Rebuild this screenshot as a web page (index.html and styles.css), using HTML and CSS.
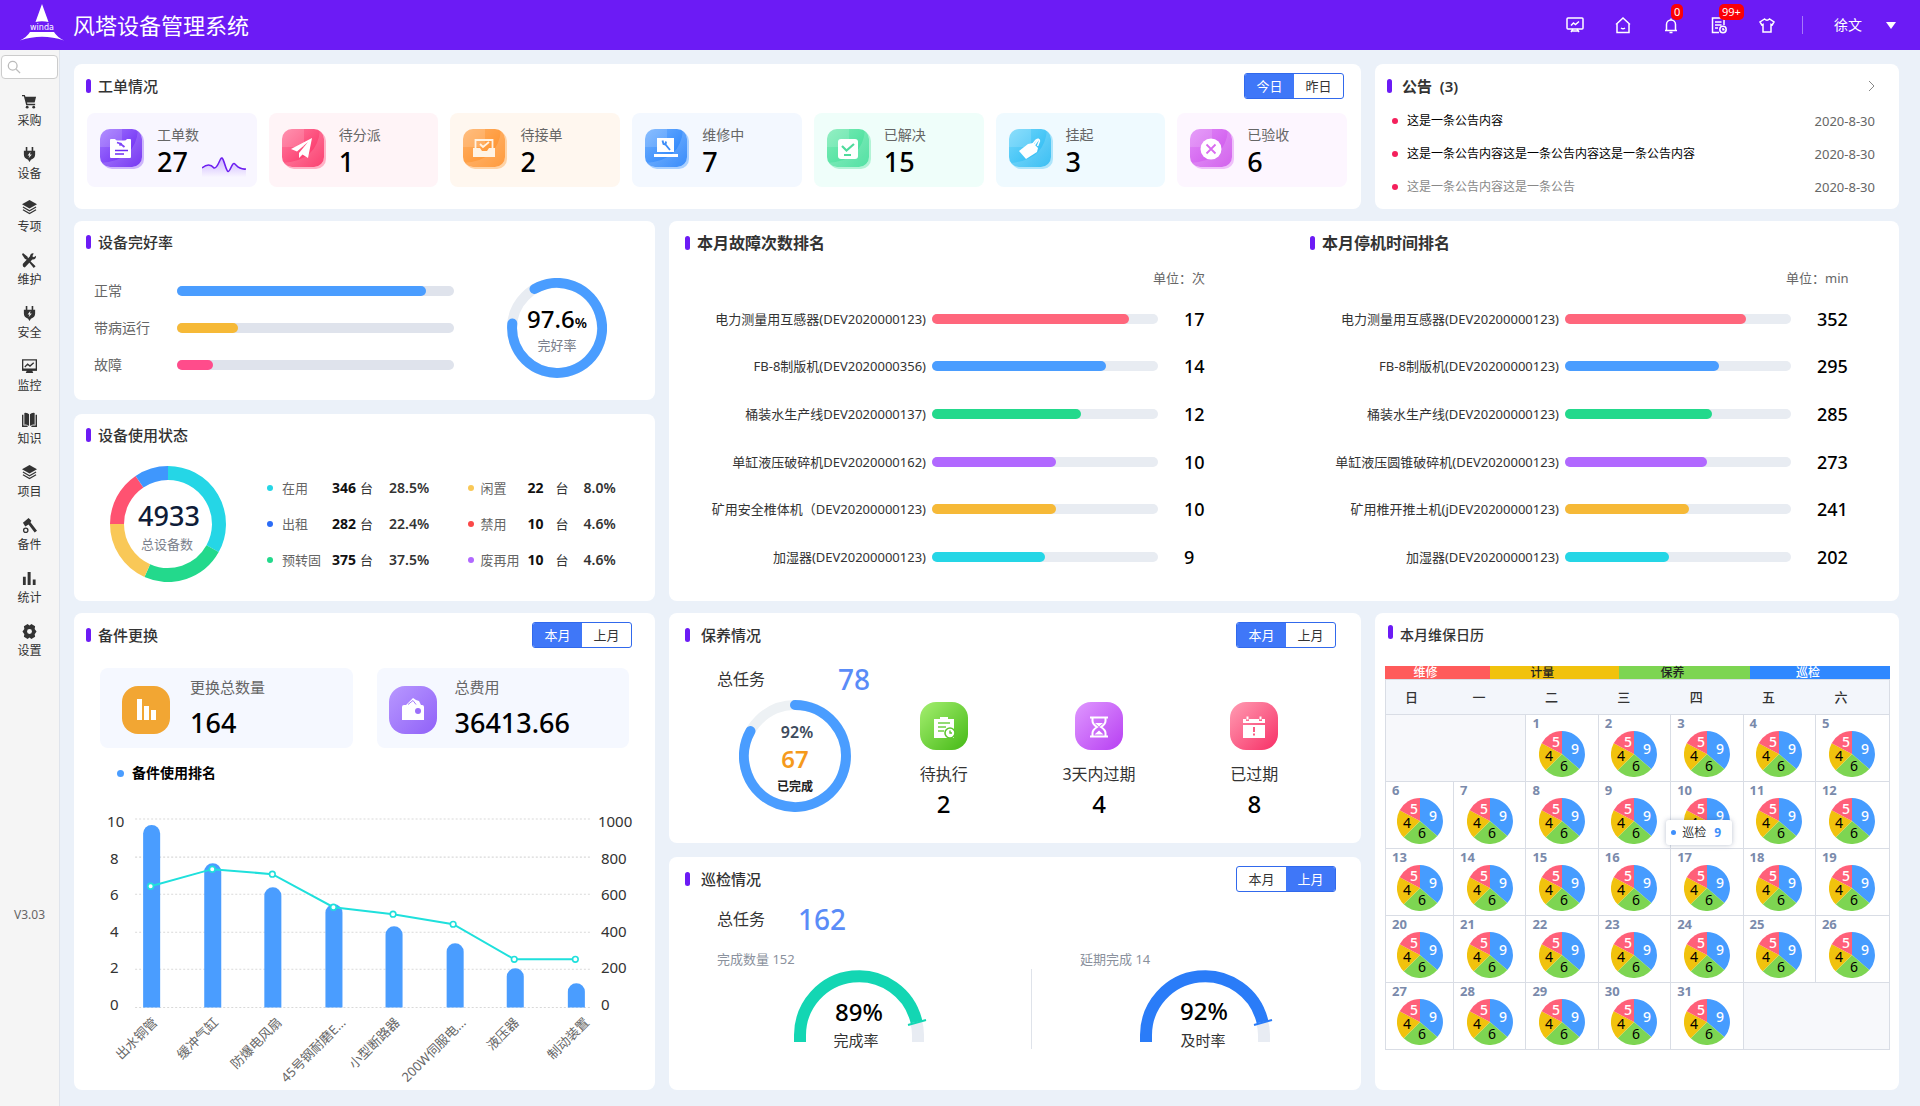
FILE: index.html
```html
<!DOCTYPE html>
<html lang="zh-CN">
<head>
  <meta charset="UTF-8" />
  <meta name="viewport" content="width=device-width, initial-scale=1.0"/>
  <title>风塔设备管理系统</title>
  <link rel="stylesheet" href="styles.css">
</head>
<body>
  <header class="topbar">
    <svg class="logo" viewBox="0 0 44 38" width="44" height="38">
      <path d="M22 0 L28.500 18 Q22 16.500 15.500 18 Z" fill="#fff"/>
      <text x="22" y="26" text-anchor="middle" class="logo-text">winda</text>
      <path d="M10 28 H34 Q37 33 44 36.500 Q22 29 0 36.500 Q7 33 10 28 Z" fill="#fff"/>
    </svg>
    <h1>风塔设备管理系统</h1>
    <nav class="top-icons">
      <button class="icon-btn" aria-label="看板">
        <svg viewBox="0 0 18 18"><rect x="1" y="2" width="16" height="11" rx="1"/><path d="M5 9.500l2.500-2.500 2 1.500L13 5.500M7 13l-2 3M11 13l2 3M6 15h6"/></svg>
      </button>
      <button class="icon-btn" aria-label="首页">
        <svg viewBox="0 0 18 18"><path d="M3 8v8.500h12V8M2 8.500L9 2l7 6.500M7 12q2 1.500 4 0"/></svg>
      </button>
      <button class="icon-btn" aria-label="消息">
        <svg viewBox="0 0 18 18"><path d="M3 14.500h12M4.500 14V8.500a4.500 4.500 0 0 1 9 0V14M7.500 16.500h3M9 4V2.500"/></svg>
        <span class="badge">0</span>
      </button>
      <button class="icon-btn" aria-label="待办">
        <svg viewBox="0 0 18 18"><path d="M9 16.500H2.500V2H14v7M5 6h6.500M5 9h6.500M5 12h3"/><circle cx="13" cy="13.500" r="3.200"/><path d="M13 12v1.700h1.500"/></svg>
        <span class="badge">99+</span>
      </button>
      <button class="icon-btn" aria-label="换肤">
        <svg viewBox="0 0 18 18"><path d="M6.500 3L2 6l1.800 3L5 8.400V16h8V8.400l1.200.6L16 6l-4.500-3q-2.500 2.500-5 0z"/></svg>
      </button>
    </nav>
    <button class="user">徐文<span class="caret"></span></button>
  </header>

  <div class="layout">
    <aside class="sidebar">
      <div class="search">
        <svg viewBox="0 0 16 16"><circle cx="6.500" cy="6.500" r="5"/><path d="M10.500 10.500L15 15"/></svg>
        <input type="text" aria-label="搜索" />
      </div>
      <a href="#"><svg viewBox="0 0 16 16"><path d="M0 1h3l.7 2H15l-1.500 6H5.400l.3 1.500H14V12H4.500L2 2.500H0z"/><circle cx="5.500" cy="14" r="1.500"/><circle cx="12.500" cy="14" r="1.500"/></svg>采购</a>
      <a href="#"><svg viewBox="0 0 16 16"><path d="M4 0h1.700v4h4.600V0H12v4h2v4q0 4-4.500 5.500L8 16l-1.500-2.500Q2 12 2 8V4h2z"/><path d="M9 5L6 9h2l-1 3 3.500-4h-2z" fill="#f5f5f5"/></svg>设备</a>
      <a href="#"><svg viewBox="0 0 16 16"><path d="M8 0l8 4.500L8 9 0 4.500z"/><path d="M1 7.500l7 4 7-4M1 10.500l7 4 7-4" fill="none" stroke="#333" stroke-width="1.300"/></svg>专项</a>
      <a href="#"><svg viewBox="0 0 16 16"><path d="M1 0l5 4 .5 2.500L14.500 14l-2 2L5.500 7.500 3 6 0 1.500z"/><path d="M15 3l-2.500 1.500L11 3.500 12.500.5Q9-.5 8.500 3.500L1 11.500Q0 15 3 15.500L11 7q4 .5 4-4z"/></svg>维护</a>
      <a href="#"><svg viewBox="0 0 16 16"><path d="M4 0h1.700v4h4.600V0H12v4h2v4q0 4-4.500 5.500L8 16l-1.500-2.500Q2 12 2 8V4h2z"/><path d="M9 5L6 9h2l-1 3 3.500-4h-2z" fill="#f5f5f5"/></svg>安全</a>
      <a href="#"><svg viewBox="0 0 16 16"><path d="M.7 1h14.600v10.500H.7zM3 8.500l3-3 2.500 2L12.500 4" fill="none" stroke="#333" stroke-width="1.400"/><path d="M0 10h16v2.500h-5l1 2.500H4l1-2.500H0z"/></svg>监控</a>
      <a href="#"><svg viewBox="0 0 16 16"><path d="M2.500 1Q6 .5 7.500 2.500V15Q6 13 2.500 13.500zM13.500 1Q10 .5 8.500 2.500V15q1.500-2 5-1.500zM0 3h1.500v11.500H6V16H0zM16 3h-1.500v11.500H10V16h6z"/></svg>知识</a>
      <a href="#"><svg viewBox="0 0 16 16"><path d="M8 0l8 4.500L8 9 0 4.500z"/><path d="M1 7.500l7 4 7-4M1 10.500l7 4 7-4" fill="none" stroke="#333" stroke-width="1.300"/></svg>项目</a>
      <a href="#"><svg viewBox="0 0 16 16"><path d="M1 5l6-5 3 3-1 1.500 7 9-2.500 2L7 7 3.500 9z"/><circle cx="4" cy="13" r="2.300" fill="none" stroke="#333" stroke-width="1.400"/></svg>备件</a>
      <a href="#"><svg viewBox="0 0 16 16"><path d="M1 6h3v9H1zM6 1h3.200v14H6zM11.500 9h3v6h-3z"/></svg>统计</a>
      <a href="#"><svg viewBox="0 0 16 16"><path d="M6 0l2 1.500L10 0l4 2.500-.5 2.700 2 2.800-2 2.800.5 2.700L10 16l-2-1.500L6 16l-4-2.500.5-2.700L.5 8l2-2.800L2 2.500z"/><circle cx="8" cy="8" r="2.600" fill="#f5f5f5"/></svg>设置</a>
      <span class="version">V3.03</span>
    </aside>

    <main class="board">
      <!-- work orders -->
      <section class="card orders">
        <div class="card-head">
          <h2>工单情况</h2>
          <div class="toggle"><button class="on">今日</button><button>昨日</button></div>
        </div>
        <div class="tiles">
          <div class="tile purple">
            <svg class="tile-icon" viewBox="0 0 42 38"><path class="shine" d="M0 0h22v18H0zM0 34Q36 32 38 0h4v38H0z"/><path d="M10 11q0-1 1-1h4q1 1.500 3 1.500h6q2 0 3-1.500h3q1 0 1 1v17q0 1-1 1H11q-1 0-1-1z" fill="#fff"/><path d="M17 13.500l3 1 4.500 3.500M19.500 16.500l2-2.500" stroke="#7d45f6" stroke-width="1.800" fill="none"/><path d="M15 21.500h13M15 25h9" stroke="#6d2cf3" stroke-width="1.500"/></svg>
            <div><p>工单数</p><strong>27</strong></div>
            <svg class="spark" viewBox="0 0 44 20">
              <defs><linearGradient id="sparkFill" x1="0" y1="0" x2="0" y2="1"><stop offset="0" stop-color="#c9b0ff"/><stop offset="1" stop-color="#f8f5ff"/></linearGradient></defs>
              <path d="M0 11Q7 5 12 11Q16 12 20 0Q24 11 27 14Q30 5 32 6Q36 12 44 12V20H0z" fill="url(#sparkFill)"/>
              <path d="M0 11Q7 5 12 11C16 12 18 0 20 1S24 14 26 14.500S30 6 32 6.500S36 13 44 12" fill="none" stroke="#6d1ff0" stroke-width="1.600"/>
            </svg>
          </div>
          <div class="tile rose">
            <svg class="tile-icon" viewBox="0 0 42 38"><path class="shine" d="M0 0h22v18H0zM0 34Q36 32 38 0h4v38H0z"/><path d="M30 9L9 20l6 2.500L26 13l-9 11v5l3.500-3.500L26 29z" fill="#fff"/></svg>
            <div><p>待分派</p><strong>1</strong></div>
          </div>
          <div class="tile orange">
            <svg class="tile-icon" viewBox="0 0 42 38"><path class="shine" d="M0 0h22v18H0zM0 34Q36 32 38 0h4v38H0z"/><path d="M12.500 20V11h17v9M17 15l3 3 6-5" fill="none" stroke="#fff3e4" stroke-width="1.800"/><path d="M10 19h7l2 3h5l2-3h6v9H10z" fill="#fff3e4"/></svg>
            <div><p>待接单</p><strong>2</strong></div>
          </div>
          <div class="tile blue">
            <svg class="tile-icon" viewBox="0 0 42 38"><path class="shine" d="M0 0h22v18H0zM0 34Q36 32 38 0h4v38H0z"/><path d="M12 9h17v14H12zM9 25h24v3H9z" fill="#fff"/><path d="M17.500 11.500l1 3.500 2 .5 4.500 5.500M21 12.500l-.5 3" fill="none" stroke="#3c8df8" stroke-width="1.900"/></svg>
            <div><p>维修中</p><strong>7</strong></div>
          </div>
          <div class="tile green">
            <svg class="tile-icon" viewBox="0 0 42 38"><path class="shine" d="M0 0h22v18H0zM0 34Q36 32 38 0h4v38H0z"/><rect x="11" y="10" width="20" height="20" rx="3" fill="#fff"/><path d="M15 17l4.500 4.500L27 15M17 26h7" fill="none" stroke="#4fdb9c" stroke-width="2.200"/></svg>
            <div><p>已解决</p><strong>15</strong></div>
          </div>
          <div class="tile sky">
            <svg class="tile-icon" viewBox="0 0 42 38"><path class="shine" d="M0 0h22v18H0zM0 34Q36 32 38 0h4v38H0z"/><path d="M10 22l9-7 5-1 5 5-1 4-11 7z" fill="#fff"/><path d="M24 18l5-7M23 16l4-5q3-2 3.500 1l-2 5" fill="none" stroke="#fff" stroke-width="1.500"/></svg>
            <div><p>挂起</p><strong>3</strong></div>
          </div>
          <div class="tile pink">
            <svg class="tile-icon" viewBox="0 0 42 38"><path class="shine" d="M0 0h22v18H0zM0 34Q36 32 38 0h4v38H0z"/><circle cx="21" cy="20" r="10.500" fill="#fff"/><path d="M16.500 15.500l9 9M25.500 15.500l-9 9" stroke="#d96bf0" stroke-width="1.800"/></svg>
            <div><p>已验收</p><strong>6</strong></div>
          </div>
        </div>
      </section>

      <!-- notices -->
      <section class="card notices">
        <div class="card-head">
          <h2>公告&nbsp; (3)</h2>
          <a href="#" class="more" aria-label="更多"><svg viewBox="0 0 8 12"><path d="M1 1l5 5-5 5"/></svg></a>
        </div>
        <ul>
          <li><span>这是一条公告内容</span><time>2020-8-30</time></li>
          <li><span>这是一条公告内容这是一条公告内容这是一条公告内容</span><time>2020-8-30</time></li>
          <li class="read"><span>这是一条公告内容这是一条公告</span><time>2020-8-30</time></li>
        </ul>
      </section>

      <div class="stack devices">
        <section class="card">
          <div class="card-head"><h2>设备完好率</h2></div>
          <div class="health">
            <div class="health-bars">
              <div class="health-row"><span>正常</span><div class="bar"><i class="c-blue" style="width:90%"></i></div></div>
              <div class="health-row"><span>带病运行</span><div class="bar"><i class="c-amber" style="width:22%"></i></div></div>
              <div class="health-row"><span>故障</span><div class="bar"><i class="c-hot" style="width:13%"></i></div></div>
            </div>
            <svg viewBox="0 0 100 100" width="100" height="100">
              <circle cx="50" cy="50" r="45" fill="none" stroke="#e8ecf2" stroke-width="10"/>
              <path d="M27.500 11A45 45 0 1 1 5.300 45.500" fill="none" stroke="#4a9dff" stroke-width="10" stroke-linecap="round"/>
              <text x="50" y="50" text-anchor="middle" class="ring-num">97.6<tspan class="ring-unit">%</tspan></text>
              <text x="50" y="72" text-anchor="middle" class="ring-label">完好率</text>
            </svg>
          </div>
        </section>

        <section class="card">
          <div class="card-head"><h2>设备使用状态</h2></div>
          <div class="usage">
            <svg viewBox="0 0 116 116" width="116" height="116">
              <g fill="none" stroke-width="14">
                <path d="M58 7A51 51 0 0 1 102.600 82.700" stroke="#25d6e6"/>
                <path d="M102.600 82.700A51 51 0 0 1 37.300 104.600" stroke="#23d98c"/>
                <path d="M37.300 104.600A51 51 0 0 1 7 58" stroke="#f9c857"/>
                <path d="M7 58A51 51 0 0 1 29.500 15.700" stroke="#ff5271"/>
                <path d="M29.500 15.700A51 51 0 0 1 58 7" stroke="#3f97fd"/>
              </g>
              <text x="59" y="60" text-anchor="middle" class="donut-num">4933</text>
              <text x="57" y="83" text-anchor="middle" class="donut-label">总设备数</text>
            </svg>
            <div class="legend">
              <div class="legend-row"><i class="c-cyan"></i><span>在用</span><b>346</b><em>台</em><b class="pct">28.5%</b></div>
              <div class="legend-row"><i class="c-yellow"></i><span>闲置</span><b>22</b><em>台</em><b class="pct">8.0%</b></div>
              <div class="legend-row"><i class="c-royal"></i><span>出租</span><b>282</b><em>台</em><b class="pct">22.4%</b></div>
              <div class="legend-row"><i class="c-red"></i><span>禁用</span><b>10</b><em>台</em><b class="pct">4.6%</b></div>
              <div class="legend-row"><i class="c-green"></i><span>预转固</span><b>375</b><em>台</em><b class="pct">37.5%</b></div>
              <div class="legend-row"><i class="c-violet"></i><span>废再用</span><b>10</b><em>台</em><b class="pct">4.6%</b></div>
            </div>
          </div>
        </section>
      </div>

      <!-- rankings -->
      <section class="card ranks">
        <div class="rank">
          <div class="card-head big"><h2>本月故障次数排名</h2></div>
          <p class="unit">单位：次</p>
          <div class="rank-list">
            <div class="rank-row"><span>电力测量用互感器(DEV2020000123)</span><div class="bar"><i class="c-coral" style="width:87%"></i></div><b>17</b></div>
            <div class="rank-row"><span>FB-8制版机(DEV2020000356)</span><div class="bar"><i class="c-blue" style="width:77%"></i></div><b>14</b></div>
            <div class="rank-row"><span>桶装水生产线DEV2020000137)</span><div class="bar"><i class="c-green" style="width:66%"></i></div><b>12</b></div>
            <div class="rank-row"><span>单缸液压破碎机DEV2020000162)</span><div class="bar"><i class="c-violet" style="width:55%"></i></div><b>10</b></div>
            <div class="rank-row"><span>矿用安全椎体机（DEV20200000123)</span><div class="bar"><i class="c-amber" style="width:55%"></i></div><b>10</b></div>
            <div class="rank-row"><span>加湿器(DEV20200000123)</span><div class="bar"><i class="c-cyan" style="width:50%"></i></div><b>9</b></div>
          </div>
        </div>
        <div class="rank">
          <div class="card-head big"><h2>本月停机时间排名</h2></div>
          <p class="unit">单位：min</p>
          <div class="rank-list">
            <div class="rank-row"><span>电力测量用互感器(DEV20200000123)</span><div class="bar"><i class="c-coral" style="width:80%"></i></div><b>352</b></div>
            <div class="rank-row"><span>FB-8制版机(DEV20200000123)</span><div class="bar"><i class="c-blue" style="width:68%"></i></div><b>295</b></div>
            <div class="rank-row"><span>桶装水生产线(DEV20200000123)</span><div class="bar"><i class="c-green" style="width:65%"></i></div><b>285</b></div>
            <div class="rank-row"><span>单缸液压圆锥破碎机(DEV2020000123)</span><div class="bar"><i class="c-violet" style="width:63%"></i></div><b>273</b></div>
            <div class="rank-row"><span>矿用椎开推土机(jDEV20200000123)</span><div class="bar"><i class="c-amber" style="width:55%"></i></div><b>241</b></div>
            <div class="rank-row"><span>加湿器(DEV20200000123)</span><div class="bar"><i class="c-cyan" style="width:46%"></i></div><b>202</b></div>
          </div>
        </div>
      </section>

      <!-- spare parts -->
      <section class="card spares">
        <div class="card-head">
          <h2>备件更换</h2>
          <div class="toggle"><button class="on">本月</button><button>上月</button></div>
        </div>
        <div class="sums">
          <div class="sum">
            <svg viewBox="0 0 48 48"><rect width="48" height="48" rx="16" fill="#f2a633"/><path d="M15 13h5v21h-5zM22 20h5v14h-5zM29 24h5v10h-5z" fill="#fff"/></svg>
            <div><p>更换总数量</p><strong>164</strong></div>
          </div>
          <div class="sum wide">
            <svg viewBox="0 0 48 48">
              <defs><linearGradient id="gWallet" x1="0" y1="0" x2="1" y2="1"><stop offset="0" stop-color="#b898ff"/><stop offset="1" stop-color="#9061f8"/></linearGradient></defs>
              <rect width="48" height="48" rx="16" fill="url(#gWallet)"/><path d="M13 21q0-2 2-2h2l7-7 3 2 3 1 2 4h1q2 0 2 2v13H13z" fill="#fff"/><path d="M19 18.500l5-4 3 4" fill="none" stroke="#a57cfb"/><circle cx="29" cy="25" r="3" fill="#9c70fa"/>
            </svg>
            <div><p>总费用</p><strong>36413.66</strong></div>
          </div>
        </div>
        <h3>备件使用排名</h3>
        <svg class="chart" viewBox="0 0 580 304">
          <g class="grid">
            <path d="M61 36H516M61 74H516M61 111H516M61 149H516M61 186H516M61 224H516"/>
          </g>
          <g class="axis">
            <text x="33" y="44">10</text><text x="36" y="81">8</text><text x="36" y="117">6</text><text x="36" y="154">4</text><text x="36" y="190">2</text><text x="36" y="227">0</text>
            <text x="523" y="44">1000</text><text x="526" y="81">800</text><text x="526" y="117">600</text><text x="526" y="154">400</text><text x="526" y="190">200</text><text x="526" y="227">0</text>
          </g>
          <g class="cols">
            <path d="M69 224V50.500a8.500 8.500 0 0 1 17 0V224z"/>
            <path d="M130 224V88.500a8.500 8.500 0 0 1 17 0V224z"/>
            <path d="M190 224V112.500a8.500 8.500 0 0 1 17 0V224z"/>
            <path d="M251 224V129.500a8.500 8.500 0 0 1 17 0V224z"/>
            <path d="M311 224V151.500a8.500 8.500 0 0 1 17 0V224z"/>
            <path d="M372 224V168.500a8.500 8.500 0 0 1 17 0V224z"/>
            <path d="M432 224V193.500a8.500 8.500 0 0 1 17 0V224z"/>
            <path d="M493 224V208.500a8.500 8.500 0 0 1 17 0V224z"/>
          </g>
          <path class="trend" d="M76.500 103L138 86L198 91L259 124L318.500 131L378.500 141L439.500 176L500.500 176"/>
          <g class="dots">
            <circle cx="76.500" cy="103" r="2.800"/><circle cx="138" cy="86" r="2.800"/><circle cx="198" cy="91" r="2.800"/><circle cx="259" cy="124" r="2.800"/><circle cx="318.500" cy="131" r="2.800"/><circle cx="378.500" cy="141" r="2.800"/><circle cx="439.500" cy="176" r="2.800"/><circle cx="500.500" cy="176" r="2.800"/>
          </g>
          <g class="cats">
            <text transform="translate(84 240) rotate(-45)">出水铜管</text>
            <text transform="translate(145 240) rotate(-45)">缓冲气缸</text>
            <text transform="translate(208 240) rotate(-45)">防爆电风扇</text>
            <text transform="translate(272 240) rotate(-45)">45号钢耐磨E...</text>
            <text transform="translate(326 240) rotate(-45)">小型断路器</text>
            <text transform="translate(392 240) rotate(-45)">200W伺服电...</text>
            <text transform="translate(445 240) rotate(-45)">液压器</text>
            <text transform="translate(515 240) rotate(-45)">制动装置</text>
          </g>
        </svg>
      </section>

      <div class="stack tasks">
        <section class="card">
          <div class="card-head loose">
            <h2>保养情况</h2>
            <div class="toggle"><button class="on">本月</button><button>上月</button></div>
          </div>
          <p class="total far">总任务<b>78</b></p>
          <div class="upkeep">
            <svg viewBox="0 0 112 112" width="112" height="112">
              <circle cx="56" cy="56" r="51" fill="none" stroke="#edf1f4" stroke-width="10"/>
              <path d="M56 5A51 51 0 1 1 11.500 31" fill="none" stroke="#4a9dff" stroke-width="10" stroke-linecap="round"/>
              <text x="58" y="38" text-anchor="middle" class="up-pct">92%</text>
              <text x="56" y="68" text-anchor="middle" class="up-num">67</text>
              <text x="56" y="91" text-anchor="middle" class="up-label">已完成</text>
            </svg>
            <div class="upkeep-item">
              <svg viewBox="0 0 48 48">
                <defs><linearGradient id="gGreen" x1="0" y1="0" x2="1" y2="1"><stop offset="0" stop-color="#a5ef70"/><stop offset="1" stop-color="#45b916"/></linearGradient></defs>
                <rect width="48" height="48" rx="16" fill="url(#gGreen)"/><path d="M14 17h6v-2h8v2h6v19H14z" fill="#fff"/><path d="M18 21h12M18 25h8M18 29h6" stroke="#6fd044" stroke-width="1.600"/><circle cx="30" cy="31" r="5" fill="#fff" stroke="#5dc62f" stroke-width="1.600"/><path d="M30 28.500V31h2" stroke="#5dc62f" stroke-width="1.400" fill="none"/>
              </svg>
              <p>待执行</p><strong>2</strong>
            </div>
            <div class="upkeep-item">
              <svg viewBox="0 0 48 48">
                <defs><linearGradient id="gViolet" x1="0" y1="0" x2="1" y2="1"><stop offset="0" stop-color="#df98ff"/><stop offset="1" stop-color="#b73ff2"/></linearGradient></defs>
                <rect width="48" height="48" rx="16" fill="url(#gViolet)"/><path d="M15 15.500h18M15 34.500h18M17.500 16v3q0 3 4.500 6-4.500 3-4.500 6v3M30.500 16v3q0 3-4.500 6 4.500 3 4.500 6v3" fill="none" stroke="#fff" stroke-width="2"/><path d="M20 21h8l-4 3.500zM19.500 32.500l4.500-4 4.500 4z" fill="#fff"/>
              </svg>
              <p>3天内过期</p><strong>4</strong>
            </div>
            <div class="upkeep-item">
              <svg viewBox="0 0 48 48">
                <defs><linearGradient id="gRose" x1="0" y1="0" x2="1" y2="1"><stop offset="0" stop-color="#ff9db3"/><stop offset="1" stop-color="#f72f66"/></linearGradient></defs>
                <rect width="48" height="48" rx="16" fill="url(#gRose)"/><path d="M13 17h3v2h3v-2h10v2h3v-2h3v4H13zM13 23h22v13H13zM16.500 14.500h2v3h-2zM29.500 14.500h2v3h-2z" fill="#fff"/><path d="M24 25v5M24 31.500v2" stroke="#fa4a77" stroke-width="1.800"/>
              </svg>
              <p>已过期</p><strong>8</strong>
            </div>
          </div>
        </section>

        <section class="card">
          <div class="card-head loose">
            <h2>巡检情况</h2>
            <div class="toggle"><button>本月</button><button class="on">上月</button></div>
          </div>
          <p class="total near">总任务<b>162</b></p>
          <div class="gauges">
            <div class="gauge">
              <p>完成数量 152</p>
              <svg viewBox="0 0 140 80" width="140" height="80">
                <path d="M129 73V66Q129 59 127 52" fill="none" stroke="#e8ecf3" stroke-width="12"/>
                <path d="M11 73V66A59 59 0 0 1 127.500 53" fill="none" stroke="#13d6b3" stroke-width="12"/>
                <path d="M119 56l18-5" stroke="#13d6b3" stroke-width="2"/>
                <text x="70" y="52" text-anchor="middle" class="gauge-num">89%</text>
                <text x="67" y="77" text-anchor="middle" class="gauge-label">完成率</text>
              </svg>
            </div>
            <div class="gauge">
              <p>延期完成 14</p>
              <svg viewBox="0 0 140 80" width="140" height="80">
                <path d="M129 73V66Q129 59 127 52" fill="none" stroke="#e8ecf3" stroke-width="12"/>
                <path d="M11 73V66A59 59 0 0 1 127.500 53" fill="none" stroke="#2a7cf8" stroke-width="12"/>
                <path d="M119 56l18-5" stroke="#2a7cf8" stroke-width="2"/>
                <text x="69" y="51" text-anchor="middle" class="gauge-num">92%</text>
                <text x="68" y="77" text-anchor="middle" class="gauge-label">及时率</text>
              </svg>
            </div>
          </div>
        </section>
      </div>

      <!-- calendar -->
      <section class="card calendar">
        <div class="card-head"><h2>本月维保日历</h2></div>
        <div class="kinds">
          <span class="k-repair">维修</span><span class="k-measure">计量</span><span class="k-upkeep">保养</span><span class="k-patrol">巡检</span>
        </div>
        <table>
          <thead>
            <tr><th>日</th><th>一</th><th>二</th><th>三</th><th>四</th><th>五</th><th>六</th></tr>
          </thead>
          <tbody id="days"></tbody>
        </table>
      </section>
    </main>
  </div>

  <script>
    const pie = `
      <svg class="pie" viewBox="-23 -23 46 46">
        <path d="M0 0V-23A23 23 0 0 1 17.300 15.100Z" fill="#469cff"/>
        <path d="M0 0L17.300 15.100A23 23 0 0 1 -16.300 16.300Z" fill="#7dd552"/>
        <path d="M0 0L-16.300 16.300A23 23 0 0 1 -20.300 -10.800Z" fill="#f1c20d"/>
        <path d="M0 0L-20.300 -10.800A23 23 0 0 1 0 -23Z" fill="#ff6079"/>
        <text x="-6" y="-7" class="light">5</text>
        <text x="13" y="0" class="light">9</text>
        <text x="-13" y="7">4</text>
        <text x="2" y="17">6</text>
      </svg>`;
    const tip = '<div class="tip"><i></i>巡检<b>9</b></div>';

    // month starts on Tuesday and has 31 days
    let html = '<tr><td colspan="2" class="blank"></td>';
    for (let day = 1; day <= 31; day++) {
      html += `<td><span class="day">${day}</span>${pie}${day === 10 ? tip : ""}</td>`;
      if ((day + 2) % 7 === 0) html += "</tr><tr>";
    }
    html += '<td colspan="2" class="blank"></td></tr>';
    document.getElementById("days").innerHTML = html;
  </script>
</body>
</html>
```
FILE: styles.css
```css
* {
  margin: 0;
  padding: 0;
  box-sizing: border-box;
}

body {
  min-height: 100vh;
  display: flex;
  flex-direction: column;
  font-family: "Noto Sans", "Noto Sans CJK SC", sans-serif;
  font-size: 13px;
  line-height: 20px;
  color: #333;
  background: #ebf1f9;
}

button,
input {
  font: inherit;
  color: inherit;
  border: none;
  background: none;
}

button {
  cursor: pointer;
}

a {
  color: inherit;
  text-decoration: none;
}

/* top bar */
.topbar {
  display: flex;
  align-items: center;
  height: 50px;
  padding: 0 24px 0 20px;
  color: #fff;
  background: #6c1bf5;
}

.logo {
  margin-bottom: 4px;
}

.logo-text {
  font-family: "DejaVu Sans", sans-serif;
  font-size: 8px;
  fill: #fff;
}

.topbar h1 {
  margin-left: 9px;
  font-size: 22px;
  font-weight: 400;
}

.top-icons {
  display: flex;
  gap: 30px;
  margin-left: auto;
  padding-right: 26px;
  border-right: 1px solid #a678fa;
}

.icon-btn {
  position: relative;
  width: 18px;
  height: 18px;
}

.icon-btn svg {
  display: block;
  width: 18px;
  height: 18px;
  fill: none;
  stroke: #fff;
  stroke-width: 1.5;
}

.badge {
  position: absolute;
  left: 9px;
  top: -12px;
  padding: 0 3px;
  border-radius: 5px;
  font-size: 11px;
  line-height: 16px;
  background: #fb0006;
}

.user {
  display: flex;
  align-items: center;
  gap: 24px;
  margin-left: 31px;
  font-size: 14px;
}

.caret {
  border: 5px solid transparent;
  border-top: 7px solid #fff;
  border-bottom: none;
}

/* side menu */
.layout {
  flex: 1;
  display: flex;
}

.sidebar {
  flex: none;
  display: flex;
  flex-direction: column;
  align-items: center;
  width: 60px;
  padding: 5px 0 0;
  background: #f5f5f5;
  border-right: 1px solid #dfe4ec;
}

.search {
  display: flex;
  align-items: center;
  width: 57px;
  height: 24px;
  margin-bottom: 10px;
  padding-left: 5px;
  border: 1px solid #ccc;
  border-radius: 4px;
  background: #fff;
}

.search svg {
  flex: none;
  width: 14px;
  height: 14px;
  fill: none;
  stroke: #bbb;
  stroke-width: 1.5;
}

.search input {
  width: 100%;
  min-width: 0;
}

.sidebar a {
  display: flex;
  flex-direction: column;
  align-items: center;
  gap: 2px;
  height: 53px;
  padding-top: 5px;
  font-size: 12px;
}

.sidebar a svg {
  width: 15px;
  height: 15px;
  fill: #333;
}

.version {
  margin: auto 0 181px;
  font-size: 12px;
  color: #666;
}

/* dashboard grid */
.board {
  flex: 1;
  display: grid;
  grid-template-columns: 581fr 692fr 524fr;
  grid-template-rows: 145fr 380fr 477fr;
  gap: 12px 14px;
  padding: 14px 21px 16px 14px;
}

.orders {
  grid-column: span 2;
}

.ranks {
  grid-column: span 2;
}

.stack {
  display: grid;
  gap: 14px;
}

.devices {
  grid-template-rows: 179fr 187fr;
}

.tasks {
  grid-template-rows: 230fr 232fr;
}

.card {
  min-width: 0;
  border-radius: 8px;
  background: #fff;
}

.card-head {
  display: flex;
  align-items: center;
  justify-content: space-between;
  height: 35px;
  padding: 9px 17px 0 12px;
}

.card-head h2 {
  display: flex;
  align-items: center;
  gap: 7px;
  font-size: 15px;
  font-weight: 500;
}

.card-head h2::before {
  content: "";
  width: 5px;
  height: 14px;
  border-radius: 3px;
  background: #6c1bf5;
}

.devices .card-head {
  height: 34px;
  padding-top: 7px;
}

.card-head.big {
  padding-left: 0;
}

.card-head.big h2 {
  font-size: 16px;
  font-weight: 700;
}

.card-head.loose {
  padding: 9px 25px 0 16px;
}

.card-head.loose h2 {
  gap: 11px;
}

.toggle {
  display: flex;
  width: 100px;
  height: 26px;
  border: 1px solid #3169ec;
  border-radius: 3px;
  overflow: hidden;
}

.toggle button {
  flex: 1;
}

.toggle .on {
  color: #fff;
  background: #3f77f8;
}

.bar {
  height: 10px;
  border-radius: 5px;
  background: #e8ecf2;
}

.bar i {
  display: block;
  height: 100%;
  border-radius: 5px;
}

.c-blue { background: #4a9dff; }
.c-amber { background: #f6b937; }
.c-hot { background: #ff4c8b; }
.c-coral { background: #ff667c; }
.c-green { background: #23d98c; }
.c-violet { background: #b168ff; }
.c-cyan { background: #25d6e6; }
.c-yellow { background: #f9c857; }
.c-royal { background: #2b6cf6; }
.c-red { background: #fb4848; }

/* work orders */
.tiles {
  display: grid;
  grid-template-columns: repeat(7, 1fr);
  gap: 12px;
  padding: 14px 14px 20px 13px;
}

.tile {
  display: flex;
  align-items: center;
  height: 74px;
  padding: 3px 0 0 13px;
  border-radius: 8px;
}

.tile-icon {
  flex: none;
  width: 42px;
  height: 38px;
  margin: 0 15px 7px 0;
  border-radius: 10px;
}

.shine {
  fill: #fff;
  opacity: 0.15;
}

.tile p {
  margin-bottom: 1px;
  font-size: 14px;
  color: #666;
}

.tile strong,
.sum strong {
  display: block;
  font-size: 27px;
  font-weight: 500;
  line-height: 32px;
  color: #000;
}

.spark {
  width: 44px;
  height: 20px;
  margin: 30px 0 0 3px;
}

.purple { background: #f8f6ff; }
.purple .tile-icon { background: linear-gradient(135deg, #a47bff, #6015f0); box-shadow: 2px 2px 0 #cdb5fb; }
.rose { background: #fff4f7; }
.rose .tile-icon { background: linear-gradient(135deg, #ff7fa2, #fb2058); box-shadow: 2px 2px 0 #ffb2c6; }
.orange { background: #fff7ef; }
.orange .tile-icon { background: linear-gradient(135deg, #ffb268, #ff8a1c); box-shadow: 2px 2px 0 #ffd3a6; }
.blue { background: #f3f8ff; }
.blue .tile-icon { background: linear-gradient(135deg, #75b3ff, #1678fa); box-shadow: 2px 2px 0 #a9d0ff; }
.green { background: #effefa; }
.green .tile-icon { background: linear-gradient(135deg, #80ecb8, #35dc94); box-shadow: 2px 2px 0 #b2f3d5; }
.sky { background: #effaff; }
.sky .tile-icon { background: linear-gradient(135deg, #78d9fb, #1ab4f2); box-shadow: 2px 2px 0 #aee5fb; }
.pink { background: #fdf6ff; }
.pink .tile-icon { background: linear-gradient(135deg, #e18df8, #cb48ea); box-shadow: 2px 2px 0 #efc0fa; }

/* notices */
.notices h2 {
  gap: 10px;
  font-weight: 600;
}

.more svg {
  display: block;
  width: 8px;
  height: 12px;
  margin-right: 6px;
  fill: none;
  stroke: #888;
}

.notices ul {
  padding: 5px 24px 0 17px;
  list-style: none;
}

.notices li {
  display: flex;
  align-items: center;
  height: 33px;
  font-size: 12px;
  color: #000;
}

.notices li::before {
  content: "";
  width: 6px;
  height: 6px;
  margin-right: 9px;
  border-radius: 50%;
  background: #f4205c;
}

.notices time {
  margin-left: auto;
  font-size: 13px;
  color: #666;
}

.notices .read {
  color: #888;
}

/* device health */
.health {
  display: flex;
  align-items: center;
  gap: 53px;
  padding: 17px 48px 0 20px;
}

.health-bars {
  flex: 1;
}

.health-row {
  display: flex;
  align-items: center;
  height: 37px;
  font-size: 14px;
  color: #666;
}

.health-row span {
  width: 83px;
}

.health-row .bar {
  flex: 1;
  background: #dfe3ec;
}

.ring-num {
  font-size: 24px;
  font-weight: 500;
  fill: #000;
}

.ring-unit {
  font-size: 14px;
  font-weight: 600;
}

.ring-label,
.donut-label {
  font-size: 13px;
  fill: #7b7f8c;
}

/* device usage */
.usage {
  display: flex;
  align-items: center;
  gap: 41px;
  padding: 18px 18px 0 36px;
}

.donut-num {
  font-size: 27px;
  font-weight: 500;
  fill: #0f1c38;
}

.legend {
  flex: 1;
  display: grid;
  grid-template-columns: 200fr 169fr;
}

.legend-row {
  display: grid;
  grid-template-columns: 15px 50px 28px 29px auto;
  align-items: center;
  height: 36px;
  font-size: 14px;
}

.legend-row:nth-child(even) {
  grid-template-columns: 13px 47px 28px 28px auto;
}

.legend-row i {
  width: 6px;
  height: 6px;
  border-radius: 50%;
}

.legend-row span {
  font-size: 13px;
  color: #666;
}

.legend-row b {
  font-weight: 700;
  color: #111;
}

.legend-row em {
  font-size: 13px;
  font-style: normal;
}

.legend-row .pct {
  font-weight: 600;
  color: #333;
}

/* rankings */
.ranks {
  display: grid;
  grid-template-columns: 581fr 605fr;
  gap: 28px;
  padding: 0 0 20px 16px;
}

.ranks .rank + .rank {
  padding-left: 16px;
}

.rank {
  display: flex;
  flex-direction: column;
}

.unit {
  align-self: flex-end;
  width: 113px;
  margin: 12px 0 7px;
  color: #666;
}

.rank-list {
  flex: 1;
  display: grid;
}

.rank-row {
  display: flex;
  align-items: center;
  min-height: 28px;
}

.rank-row span {
  flex: 1;
  padding-right: 6px;
  text-align: right;
  white-space: nowrap;
}

.rank-row .bar {
  width: 226px;
}

.rank-row b {
  width: 82px;
  margin-left: 26px;
  font-size: 18px;
  font-weight: 500;
  color: #000;
}

/* spare parts */
.spares .card-head {
  padding-right: 23px;
}

.sums {
  display: grid;
  grid-template-columns: 1fr 1fr;
  gap: 24px;
  padding: 20px 26px 0;
}

.sum {
  display: flex;
  align-items: center;
  gap: 20px;
  height: 80px;
  padding-left: 22px;
  border-radius: 8px;
  background: #f5f8ff;
}

.sum.wide {
  gap: 18px;
  padding-left: 12px;
}

.sum svg {
  width: 48px;
  height: 48px;
  margin-top: 4px;
}

.sum p {
  margin-bottom: 10px;
  font-size: 15px;
  color: #666;
}

.spares h3 {
  display: flex;
  align-items: center;
  gap: 8px;
  padding: 15px 0 0 43px;
  font-size: 14px;
  font-weight: 600;
  color: #000;
}

.spares h3::before {
  content: "";
  width: 7px;
  height: 7px;
  border-radius: 50%;
  background: #4a9dff;
}

.chart {
  display: block;
  width: 100%;
}

.grid {
  stroke: #d9d9d9;
  stroke-dasharray: 2 2;
}

.axis {
  font-size: 15px;
  fill: #333;
}

.cols {
  fill: #4a9dff;
}

.trend {
  fill: none;
  stroke: #1fe0dc;
  stroke-width: 2;
}

.dots {
  fill: #fff;
  stroke: #1fe0dc;
  stroke-width: 1.6;
}

.cats {
  font-size: 13px;
  text-anchor: end;
  fill: #666;
}

/* upkeep and patrol */
.total {
  display: flex;
  align-items: center;
  height: 30px;
  padding-left: 48px;
  font-size: 16px;
}

.total b {
  font-size: 28px;
  font-weight: 500;
  color: #5a8cf8;
}

.total.far {
  gap: 73px;
  margin: 16px 0 6px;
}

.total.near {
  gap: 33px;
  margin: 12px 0 15px;
}

.upkeep {
  display: grid;
  grid-template-columns: 127px repeat(3, 1fr);
  padding: 0 29px 0 70px;
}

.upkeep-item {
  padding-top: 2px;
  text-align: center;
}

.upkeep-item svg {
  display: block;
  width: 48px;
  height: 48px;
  margin: 0 auto 14px;
}

.upkeep-item p {
  margin-bottom: 6px;
  font-size: 16px;
}

.upkeep-item strong {
  display: block;
  font-size: 24px;
  font-weight: 500;
  line-height: 28px;
  color: #000;
}

.up-pct {
  font-size: 16px;
  font-weight: 600;
  fill: #3c4a5c;
}

.up-num {
  font-size: 24px;
  font-weight: 600;
  fill: #f59a1c;
}

.up-label {
  font-size: 12px;
  font-weight: 600;
  fill: #222;
}

.gauges {
  display: grid;
  grid-template-columns: 363fr 329fr;
}

.gauge {
  padding-left: 16px;
  text-align: center;
}

.gauge:first-child {
  background: linear-gradient(#dfe3ea, #dfe3ea) right bottom / 1px 80px no-repeat;
}

.gauge p {
  padding-left: 32px;
  text-align: left;
  color: #8a919d;
}

.gauge svg {
  display: block;
  margin: 0 auto;
}

.gauge-num {
  font-size: 24px;
  font-weight: 500;
  fill: #000;
}

.gauge-label {
  font-size: 15px;
  fill: #333;
}

/* calendar */
.calendar .card-head h2 {
  align-items: flex-start;
  font-size: 14px;
}

.calendar .card-head {
  padding-left: 13px;
}

.kinds {
  display: grid;
  grid-template-columns: 105fr 129fr 132fr 140fr;
  margin: 18px 9px 0 10px;
  font-size: 12px;
  font-weight: 500;
  line-height: 13px;
  text-align: center;
}

.kinds span {
  padding-right: 24px;
}

.k-repair { color: #fff; background: #ff5b5b; }
.k-measure { color: #222; background: #f1c20d; }
.k-upkeep { color: #222; background: #7dd552; }
.k-patrol { color: #fff; background: #2f88ff; }

.calendar table {
  width: calc(100% - 19px);
  margin: 0 9px 0 10px;
  table-layout: fixed;
  border-collapse: collapse;
  border: 1px solid #d9dde5;
}

.calendar th {
  height: 35px;
  padding-left: 19px;
  font-weight: 500;
  text-align: left;
  background: #f3f6fb;
}

.calendar th:first-child {
  width: 13.5%;
}

.calendar th:last-child {
  width: 14.7%;
}

.calendar td {
  position: relative;
  height: 67px;
  padding: 1px 0 3px;
  border: 1px solid #d9dde5;
  vertical-align: top;
}

.calendar .blank {
  background: #f7f8fb;
}

.day {
  display: block;
  padding-left: 6px;
  font-weight: 700;
  line-height: 15px;
  color: #7a8aab;
}

.pie {
  display: block;
  width: 46px;
  height: 46px;
  margin: 0 auto;
  font-size: 14px;
  text-anchor: middle;
}

.pie .light {
  font-weight: 500;
  fill: #fff;
}

.tip {
  position: absolute;
  left: -5px;
  top: 38px;
  z-index: 1;
  display: flex;
  align-items: center;
  gap: 6px;
  height: 25px;
  padding: 0 11px 0 5px;
  border-radius: 3px;
  font-size: 12px;
  white-space: nowrap;
  background: #fff;
  box-shadow: 0 0 5px rgba(60, 80, 120, 0.35);
}

.tip i {
  width: 5px;
  height: 5px;
  border-radius: 50%;
  background: #3f8ffb;
}

.tip b {
  margin-left: 2px;
  color: #3f8ffb;
}
```
